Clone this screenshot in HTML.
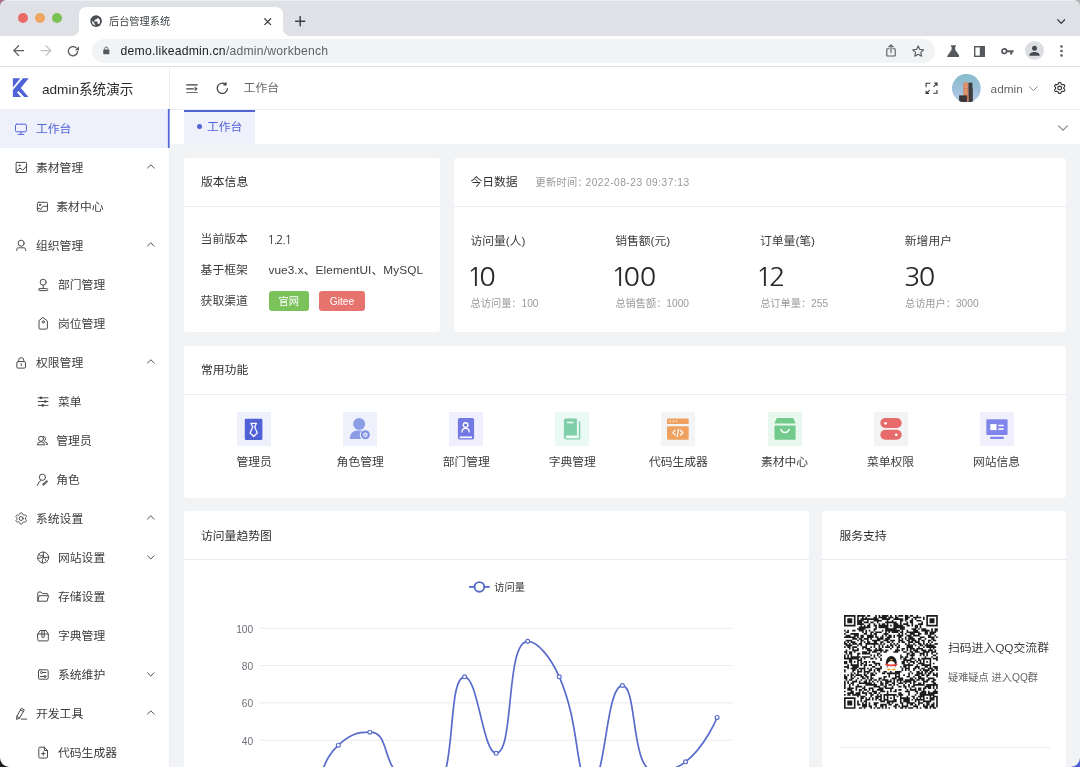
<!DOCTYPE html>
<html lang="zh-CN">
<head>
<meta charset="utf-8">
<title>后台管理系统</title>
<style>
*{box-sizing:border-box}
html,body{margin:0;padding:0}
body{width:1080px;height:767px;overflow:hidden;position:relative;background:#f2f3f5;font-family:"Liberation Sans","Noto Sans CJK SC",sans-serif;font-size:11.800px;color:#3c3c3c;line-height:1}
#wrap{position:absolute;left:0;top:0;width:1080px;height:767px;overflow:hidden;will-change:transform}
.abs{position:absolute}
svg{display:block}
/* ---------- browser chrome ---------- */
#tabbar{position:absolute;left:0;top:0;width:1080px;height:36px;background:#dfe1e6;border-top:1px solid #eceef2}
#tab{position:absolute;left:79px;top:7px;width:204px;height:29px;background:#fff;border-radius:7px 7px 0 0}
#tab:before,#tab:after{content:"";position:absolute;bottom:0;width:7px;height:7px}
#tab:before{left:-7px;background:radial-gradient(circle at 0 0,rgba(255,255,255,0) 6.6px,#fff 7.2px)}
#tab:after{right:-7px;background:radial-gradient(circle at 100% 0,rgba(255,255,255,0) 6.6px,#fff 7.2px)}
.tl{position:absolute;top:12.6px;width:10.4px;height:10.4px;border-radius:50%}
#tabtitle{position:absolute;left:109px;top:17.300px;font-size:10.2px;color:#3c4043;letter-spacing:0}
#toolbar{position:absolute;left:0;top:36px;width:1080px;height:31px;background:#fff;border-bottom:1px solid #dddfe2}
#omni{position:absolute;left:92px;top:39px;width:842.500px;height:24px;border-radius:12px;background:#f1f3f4}
#url{position:absolute;left:120.600px;top:45.100px;font-size:12.200px;color:#202124;white-space:nowrap;letter-spacing:0.215px}
#url span{color:#5f6368}
/* ---------- app ---------- */
#side{position:absolute;left:0;top:67px;width:170px;height:700px;background:#fff;border-right:1px solid #eceef3}
#logo{position:absolute;left:42px;top:82.600px;font-size:13.6px;color:#2b2b2b;white-space:nowrap}
.mi{position:absolute;left:0;width:169px;height:39px}
.mi .ico{position:absolute;left:0;top:0;color:#4a4a4a}
.mi .mt{position:absolute;left:36px;top:15px;white-space:nowrap}
.mi.sub .mt{left:58px}
.mi .chev{position:absolute;left:146.950px;top:16.300px}
.mi.act{background:#eef0fc;color:#5264d6;width:170px}
.mi.act:after{content:"";position:absolute;left:167px;top:0;width:3px;height:39px;background:linear-gradient(90deg,rgba(82,100,214,0) 0,rgba(82,100,214,.25) 33%,#5264d6 34%,#5264d6 66%,rgba(82,100,214,.6) 67%)}
.mi.act .ico{color:#5264d6}
#head{position:absolute;left:170px;top:67px;width:910px;height:43px;background:#fff;border-bottom:1px solid #e8eaf2}
#tabs{position:absolute;left:170px;top:109.6px;width:910px;height:34px;background:#fff}
#atab{position:absolute;left:184px;top:109.8px;width:71px;height:33.8px;background:#eef0fc;border-top:2px solid #5264d6;color:#5264d6}
.card{position:absolute;background:#fff;border-radius:3.400px}
.card .hd{position:absolute;left:0;top:0;right:0;height:49px;border-bottom:1px solid #e9eaf1}
.card .tt{position:absolute;left:17px;top:19.6px;white-space:nowrap;color:#2f2f2f}
.t{position:absolute;white-space:nowrap}
.sm{font-size:10.2px;color:#999}
.big{font-family:"NanumGothic","Liberation Sans",sans-serif;font-size:24.800px;color:#2a2a2a;letter-spacing:0;transform:scaleX(1.100);transform-origin:0 0}
.big i{font-style:normal;display:inline-block}
.btn{position:absolute;top:291.200px;height:19.800px;border-radius:3.200px;color:#fff;font-size:10.2px;text-align:center;line-height:21.400px}
.fi{position:absolute;top:411.6px;width:34px;height:34px}
.fl{position:absolute;top:457.200px;width:106px;text-align:center;white-space:nowrap}
</style>
</head>
<body>
<div id="wrap">
<!-- browser chrome -->
<div id="tabbar"></div>
<svg class="abs" style="left:0;top:0" width="9" height="9" viewBox="0 0 9 9"><path d="M0 0H6.200A6.200 6.200 0 0 0 0 6.200Z" fill="#a8678a"/></svg>
<svg class="abs" style="left:1071px;top:0" width="9" height="9" viewBox="0 0 9 9"><path d="M9 0H2.800A6.200 6.200 0 0 1 9 6.200Z" fill="#b0b0b0"/></svg>
<div class="tl" style="left:17.6px;background:#e96a67"></div>
<div class="tl" style="left:34.6px;background:#f0a660"></div>
<div class="tl" style="left:51.6px;background:#7cc153"></div>
<div id="tab"></div>
<svg class="abs" style="left:89.900px;top:15px" width="12.200" height="12.200" viewBox="0 0 24 24"><circle cx="12" cy="12" r="11.4" fill="#4a4d51"/><path d="M10.8 20.9c-3.9-.5-7-3.900-7-7.900 0-.6.1-1.200.2-1.800L8.800 16v1c0 1.100.9 2 2 2zM17.700 18.400c-.3-.8-1-1.400-1.900-1.400h-1v-3c0-.6-.4-1-1-1h-6v-2h2c.6 0 1-.4 1-1V8h2c1.100 0 2-.9 2-2v-.4c2.900 1.200 5 4.100 5 7.400 0 2.100-.8 4-2.100 5.400z" fill="#fff"/></svg>
<div id="tabtitle">后台管理系统</div>
<svg class="abs" style="left:264.4px;top:17.6px" width="7.4" height="7.4" viewBox="0 0 8 8" stroke="#3c4043" stroke-width="1.3" stroke-linecap="round"><path d="M0.8 0.8L7.2 7.2M7.2 0.8L0.8 7.2"/></svg>
<svg class="abs" style="left:295.4px;top:16.2px" width="10.4" height="10.4" viewBox="0 0 10 10" stroke="#3c4043" stroke-width="1.4" stroke-linecap="round"><path d="M5 0.6V9.400M0.6 5H9.400"/></svg>
<svg class="abs" style="left:1057.4px;top:19px" width="8.4" height="5.4" viewBox="0 0 8.4 5.4" fill="none" stroke="#3c4043" stroke-width="1.3" stroke-linecap="round" stroke-linejoin="round"><path d="M0.8 0.8L4.2 4.4 7.6 0.8"/></svg>
<div id="toolbar"></div>
<div id="omni"></div>
<!-- nav arrows -->
<svg class="abs" style="left:12.8px;top:45.4px" width="11.6" height="11.2" viewBox="0 0 11.6 11.2" fill="none" stroke="#585b5f" stroke-width="1.3" stroke-linecap="round" stroke-linejoin="round"><path d="M10.8 5.600H1M5.600 0.800L0.800 5.600l4.800 4.800"/></svg>
<svg class="abs" style="left:40.200px;top:45.4px" width="11.6" height="11.2" viewBox="0 0 11.6 11.2" fill="none" stroke="#bfc2c6" stroke-width="1.3" stroke-linecap="round" stroke-linejoin="round"><path d="M0.800 5.600H10.600M6 0.800l4.800 4.800-4.800 4.800"/></svg>
<svg class="abs" style="left:66.8px;top:44.6px" width="12.4" height="12.4" viewBox="0 0 12.4 12.4" fill="none" stroke="#585b5f" stroke-width="1.35" stroke-linecap="round" stroke-linejoin="round"><path d="M10.600 6.400a4.600 4.600 0 1 1-1.500-3.600"/><path d="M12.100 1.100v4.100H8z" fill="#585b5f" stroke="none"/></svg>
<!-- lock -->
<svg class="abs" style="left:103.400px;top:46.400px" width="6.600" height="8.800" viewBox="0 0 8 10"><rect x="0.300" y="4" width="7.400" height="5.800" rx="0.900" fill="#55585d"/><path d="M2 4.200V2.900a2 2 0 0 1 4 0v1.300" fill="none" stroke="#55585d" stroke-width="1.1"/></svg>
<div id="url">demo.likeadmin.cn<span>/admin/workbench</span></div>
<!-- share -->
<svg class="abs" style="left:886.400px;top:44.300px" width="10" height="13" viewBox="0 0 10 13" fill="none" stroke="#585b5f" stroke-width="1.1" stroke-linecap="round" stroke-linejoin="round"><path d="M3.200 4.800H1.400a0.600 0.600 0 0 0-0.600 0.600v6a0.600 0.600 0 0 0 0.600 0.600h7.200a0.600 0.600 0 0 0 0.600-0.600v-6a0.600 0.600 0 0 0-0.600-0.600H6.800M5 8.600V0.900M2.800 2.900L5 0.800l2.200 2.100"/></svg>
<!-- star -->
<svg class="abs" style="left:912.400px;top:44.900px" width="12.4" height="12" viewBox="0 0 12.4 12" fill="none" stroke="#585b5f" stroke-width="1.15" stroke-linejoin="round"><path d="M6.200 0.900l1.600 3.500 3.800 0.400-2.800 2.600 0.800 3.800-3.400-1.900-3.400 1.900 0.800-3.800L0.800 4.800l3.800-0.400z"/></svg>
<!-- flask -->
<svg class="abs" style="left:946.600px;top:44.900px" width="12.800" height="12.400" viewBox="0 0 12.800 12.400"><path d="M3.800 0.300h5.200v1.200H8.200v3.200l4.300 6.200a0.900 0.900 0 0 1-0.700 1.400H1a0.900 0.900 0 0 1-0.700-1.400l4.300-6.200V1.500H3.800z" fill="#55585d"/></svg>
<!-- side panel -->
<svg class="abs" style="left:974.400px;top:45.900px" width="11" height="11" viewBox="0 0 11 11"><rect x="0.700" y="0.700" width="9.600" height="9.600" fill="none" stroke="#55585d" stroke-width="1.400"/><rect x="5.800" y="0.700" width="4.500" height="9.600" fill="#55585d"/></svg>
<!-- key -->
<svg class="abs" style="left:1000.600px;top:47.600px" width="13" height="7.6" viewBox="0 0 13 7.6"><circle cx="3.300" cy="3.200" r="2.300" fill="none" stroke="#55585d" stroke-width="1.700"/><path d="M5.600 2.300h7v2h-1.300v2.300H9.200V4.300H5.600z" fill="#55585d"/></svg>
<!-- profile -->
<svg class="abs" style="left:1024.8px;top:41.2px" width="19" height="19" viewBox="0 0 19 19"><circle cx="9.500" cy="9.500" r="9.500" fill="#dcdee2"/><circle cx="9.500" cy="7.300" r="2.500" fill="#45484d"/><path d="M4.400 14.100c0-2.200 3-3.100 5.100-3.100s5.100 0.900 5.100 3.100v0.700H4.400z" fill="#45484d"/></svg>
<!-- dots -->
<svg class="abs" style="left:1060px;top:45px" width="3" height="12" viewBox="0 0 3 12" fill="#585b5f"><circle cx="1.500" cy="1.500" r="1.300"/><circle cx="1.500" cy="6" r="1.300"/><circle cx="1.500" cy="10.500" r="1.300"/></svg>

<!-- sidebar -->
<div id="side"></div>
<svg class="abs" style="left:0;top:66px" width="40" height="43" viewBox="0 66 40 43"><path d="M12.880 78.260H20.390L12.880 87.520Z" fill="#5063d6"/><path d="M22.900 78.260H28.740L20.810 88.060 28.530 97.030H24.150L18.520 90.980 17.060 92.440 21.020 97.030H12.880V89.940Z" fill="#5063d6"/></svg>
<div id="logo">admin系统演示</div>
<div class="mi act" style="top:109px"><svg class="ico" width="56" height="39" viewBox="0 0 56 39" fill="none" stroke="currentColor" stroke-width="1" stroke-linecap="round" stroke-linejoin="round"><rect x="15.5" y="15.2" width="10.9" height="7.6" rx="1.2"/><path d="M21 22.9v2.4M18.200 25.400h5.600"/></svg><span class="mt">工作台</span></div>
<div class="mi" style="top:148px"><svg class="ico" width="56" height="39" viewBox="0 0 56 39" fill="none" stroke="currentColor" stroke-width="1" stroke-linecap="round" stroke-linejoin="round"><rect x="16.100" y="14.400" width="10.400" height="10.100" rx="0.800"/><circle cx="19.500" cy="17.500" r="0.600" fill="currentColor"/><path d="M16.500 24.100L19 20.700Q20 19.900 21 20.700Q22.500 22.400 23.600 21.400L26.400 18.200"/></svg><span class="mt">素材管理</span><svg class="chev" width="7.7" height="4.8" viewBox="0 0 8.8 5.5" fill="none" stroke="#4a4a4a" stroke-width="1.1" stroke-linecap="round" stroke-linejoin="round"><path d="M0.6 4.6L4.4 0.9 8.2 4.6"/></svg></div>
<div class="mi sub" style="top:187px"><svg class="ico" width="56" height="39" viewBox="0 0 56 39" fill="none" stroke="currentColor" stroke-width="1" stroke-linecap="round" stroke-linejoin="round"><rect x="37.400" y="15.300" width="10.100" height="9" rx="1.200"/><circle cx="40" cy="17.900" r="0.700" fill="currentColor"/><path d="M37.600 21.400L39.400 21.500Q40.300 21.700 40.700 22.500L42 20.100Q42.800 19.300 43.600 19.300L47.400 19.300"/></svg><span class="mt" style="left:56.3px">素材中心</span></div>
<div class="mi" style="top:226px"><svg class="ico" width="56" height="39" viewBox="0 0 56 39" fill="none" stroke="currentColor" stroke-width="1" stroke-linecap="round" stroke-linejoin="round"><circle cx="21.200" cy="17.200" r="3"/><path d="M16.800 24.600V23.400a1.600 1.600 0 0 1 1.600-1.600H24a1.600 1.600 0 0 1 1.600 1.600V24.600"/></svg><span class="mt">组织管理</span><svg class="chev" width="7.7" height="4.8" viewBox="0 0 8.8 5.5" fill="none" stroke="#4a4a4a" stroke-width="1.1" stroke-linecap="round" stroke-linejoin="round"><path d="M0.6 4.6L4.4 0.9 8.2 4.6"/></svg></div>
<div class="mi sub" style="top:265px"><svg class="ico" width="56" height="39" viewBox="0 0 56 39" fill="none" stroke="currentColor" stroke-width="1" stroke-linecap="round" stroke-linejoin="round"><circle cx="43.200" cy="17.200" r="3"/><path d="M43.200 20.200v3.200"/><rect x="38.600" y="23.600" width="9.200" height="2" rx="1"/></svg><span class="mt">部门管理</span></div>
<div class="mi sub" style="top:304px"><svg class="ico" width="56" height="39" viewBox="0 0 56 39" fill="none" stroke="currentColor" stroke-width="1" stroke-linecap="round" stroke-linejoin="round"><path d="M43.200 13.700L47.400 17V24.100a1 1 0 0 1-1 1H40a1 1 0 0 1-1-1V17Z"/><circle cx="43.300" cy="17.900" r="1.100"/></svg><span class="mt">岗位管理</span></div>
<div class="mi" style="top:343px"><svg class="ico" width="56" height="39" viewBox="0 0 56 39" fill="none" stroke="currentColor" stroke-width="1" stroke-linecap="round" stroke-linejoin="round"><rect x="16.800" y="18.600" width="8.700" height="6.500" rx="1.200"/><path d="M18.700 18.400V17.200a2.550 2.550 0 0 1 5.100 0V18.400M21.200 20.700V22.600"/></svg><span class="mt">权限管理</span><svg class="chev" width="7.7" height="4.8" viewBox="0 0 8.8 5.5" fill="none" stroke="#4a4a4a" stroke-width="1.1" stroke-linecap="round" stroke-linejoin="round"><path d="M0.6 4.6L4.4 0.9 8.2 4.6"/></svg></div>
<div class="mi sub" style="top:382px"><svg class="ico" width="56" height="39" viewBox="0 0 56 39" fill="none" stroke="currentColor" stroke-width="1" stroke-linecap="round" stroke-linejoin="round"><path d="M38.200 15.800H48M38.200 19.500H48M38.200 23.400H48"/><circle cx="41" cy="15.800" r="1.350" fill="currentColor" stroke="none"/><circle cx="45.200" cy="19.500" r="1.350" fill="currentColor" stroke="none"/><circle cx="42.700" cy="23.400" r="1.350" fill="currentColor" stroke="none"/></svg><span class="mt">菜单</span></div>
<div class="mi sub" style="top:421px"><svg class="ico" width="56" height="39" viewBox="0 0 56 39" fill="none" stroke="currentColor" stroke-width="1" stroke-linecap="round" stroke-linejoin="round"><circle cx="41" cy="17.800" r="2.500"/><path d="M37.300 23.400Q37.600 20.700 41 20.700Q44.400 20.700 44.700 23.400Z"/><path d="M43.300 15.400a2.500 2.500 0 0 1 0.900 4.700M45 20.700Q47.300 21.300 47.700 23.400H46.400"/></svg><span class="mt" style="left:56.3px">管理员</span></div>
<div class="mi sub" style="top:460px"><svg class="ico" width="56" height="39" viewBox="0 0 56 39" fill="none" stroke="currentColor" stroke-width="1" stroke-linecap="round" stroke-linejoin="round"><circle cx="42.400" cy="17.300" r="3.100"/><path d="M40.800 20.500Q38.200 21.400 37.500 25.300"/><path d="M47.500 20.700L42.700 25.100" stroke-width="2.200" stroke="#666" stroke-linecap="butt"/></svg><span class="mt" style="left:56.3px">角色</span></div>
<div class="mi" style="top:499px"><svg class="ico" width="56" height="39" viewBox="0 0 56 39" fill="none" stroke="currentColor" stroke-width="1" stroke-linecap="round" stroke-linejoin="round"><path d="M25.50 19.50 L25.49 19.73 L25.48 19.95 L25.45 20.17 L25.67 20.45 L25.98 20.78 L26.27 21.15 L26.43 21.51 L26.32 21.78 L26.19 22.04 L26.05 22.30 L25.90 22.55 L25.73 22.79 L25.55 23.02 L25.16 23.07 L24.70 23.00 L24.26 22.89 L23.91 22.84 L23.73 22.98 L23.54 23.11 L23.35 23.22 L23.15 23.33 L22.95 23.43 L22.74 23.51 L22.61 23.84 L22.48 24.28 L22.31 24.72 L22.08 25.03 L21.79 25.07 L21.49 25.09 L21.20 25.10 L20.91 25.09 L20.61 25.07 L20.32 25.03 L20.09 24.72 L19.92 24.28 L19.79 23.84 L19.66 23.51 L19.45 23.43 L19.25 23.33 L19.05 23.22 L18.86 23.11 L18.67 22.98 L18.49 22.84 L18.14 22.89 L17.70 23.00 L17.24 23.07 L16.85 23.02 L16.67 22.79 L16.50 22.55 L16.35 22.30 L16.21 22.04 L16.08 21.78 L15.97 21.51 L16.13 21.15 L16.42 20.78 L16.73 20.45 L16.95 20.17 L16.92 19.95 L16.91 19.73 L16.90 19.50 L16.91 19.27 L16.92 19.05 L16.95 18.83 L16.73 18.55 L16.42 18.22 L16.13 17.85 L15.97 17.49 L16.08 17.22 L16.21 16.96 L16.35 16.70 L16.50 16.45 L16.67 16.21 L16.85 15.98 L17.24 15.93 L17.70 16.00 L18.14 16.11 L18.49 16.16 L18.67 16.02 L18.86 15.89 L19.05 15.78 L19.25 15.67 L19.45 15.57 L19.66 15.49 L19.79 15.16 L19.92 14.72 L20.09 14.28 L20.32 13.97 L20.61 13.93 L20.91 13.91 L21.20 13.90 L21.49 13.91 L21.79 13.93 L22.08 13.97 L22.31 14.28 L22.48 14.72 L22.61 15.16 L22.74 15.49 L22.95 15.57 L23.15 15.67 L23.35 15.78 L23.54 15.89 L23.73 16.02 L23.91 16.16 L24.26 16.11 L24.70 16.00 L25.16 15.93 L25.55 15.98 L25.73 16.21 L25.90 16.45 L26.05 16.70 L26.19 16.96 L26.32 17.22 L26.43 17.49 L26.27 17.85 L25.98 18.22 L25.67 18.55 L25.45 18.83 L25.48 19.05 L25.49 19.27Z"/><circle cx="21.200" cy="19.500" r="2"/></svg><span class="mt">系统设置</span><svg class="chev" width="7.7" height="4.8" viewBox="0 0 8.8 5.5" fill="none" stroke="#4a4a4a" stroke-width="1.1" stroke-linecap="round" stroke-linejoin="round"><path d="M0.6 4.6L4.4 0.9 8.2 4.6"/></svg></div>
<div class="mi sub" style="top:538px"><svg class="ico" width="56" height="39" viewBox="0 0 56 39" fill="none" stroke="currentColor" stroke-width="1" stroke-linecap="round" stroke-linejoin="round"><circle cx="43.200" cy="19.500" r="5.500"/><path d="M43.400 14.100V19.500L48.600 19.200M43.400 19.500Q41.400 21.600 42.600 24.900M38.200 16.200Q40.600 18.700 43.400 17.800M37.800 20.600Q41 20.400 43.400 18.400M45 20.800Q45.200 23 47 24"/></svg><span class="mt">网站设置</span><svg class="chev" style="top:17.3px" width="7.7" height="4.8" viewBox="0 0 8.8 5.5" fill="none" stroke="#4a4a4a" stroke-width="1.1" stroke-linecap="round" stroke-linejoin="round"><path d="M0.6 0.9L4.4 4.6 8.2 0.9"/></svg></div>
<div class="mi sub" style="top:577px"><svg class="ico" width="56" height="39" viewBox="0 0 56 39" fill="none" stroke="currentColor" stroke-width="1" stroke-linecap="round" stroke-linejoin="round"><path d="M37.800 24V15.900a0.900 0.900 0 0 1 0.900-0.900H41L42.600 16.600H47a0.700 0.700 0 0 1 0.700 0.700V18.400"/><path d="M39.600 18.700H48.600L47.100 24.200H38Z"/></svg><span class="mt">存储设置</span></div>
<div class="mi sub" style="top:616px"><svg class="ico" width="56" height="39" viewBox="0 0 56 39" fill="none" stroke="currentColor" stroke-width="1" stroke-linecap="round" stroke-linejoin="round"><path d="M37.800 18H48.300V23.900a1 1 0 0 1-1 1H38.800a1 1 0 0 1-1-1ZM37.800 18L40.200 14.500H46L48.300 18"/><path d="M41.900 14.500V21a0.500 0.500 0 0 0 0.500 0.500H43.700a0.500 0.500 0 0 0 0.500-0.500V14.500"/></svg><span class="mt">字典管理</span></div>
<div class="mi sub" style="top:655px"><svg class="ico" width="56" height="39" viewBox="0 0 56 39" fill="none" stroke="currentColor" stroke-width="1" stroke-linecap="round" stroke-linejoin="round"><rect x="38.500" y="14.800" width="9.700" height="9.400" rx="1.300"/><circle cx="41.500" cy="17.500" r="1.050"/><path d="M42.600 17.500H46M40.200 21.500H43.800"/><circle cx="44.900" cy="21.500" r="1.050"/></svg><span class="mt">系统维护</span><svg class="chev" style="top:17.3px" width="7.7" height="4.8" viewBox="0 0 8.8 5.5" fill="none" stroke="#4a4a4a" stroke-width="1.1" stroke-linecap="round" stroke-linejoin="round"><path d="M0.6 0.9L4.4 4.6 8.2 0.9"/></svg></div>
<div class="mi" style="top:694px"><svg class="ico" width="56" height="39" viewBox="0 0 56 39" fill="none" stroke="currentColor" stroke-width="1" stroke-linecap="round" stroke-linejoin="round"><path d="M16.500 25L16.900 22.400 21.400 14.200 24.300 15.900 19.600 24ZM16.900 22.400L19.600 24M20.500 15.900L23.400 17.500M21.200 25.100H26.600"/></svg><span class="mt">开发工具</span><svg class="chev" width="7.7" height="4.8" viewBox="0 0 8.8 5.5" fill="none" stroke="#4a4a4a" stroke-width="1.1" stroke-linecap="round" stroke-linejoin="round"><path d="M0.6 4.6L4.4 0.9 8.2 4.6"/></svg></div>
<div class="mi sub" style="top:733px"><svg class="ico" width="56" height="39" viewBox="0 0 56 39" fill="none" stroke="currentColor" stroke-width="1" stroke-linecap="round" stroke-linejoin="round"><path d="M38.800 15.200a1 1 0 0 1 1-1H44.400L47.500 17.500V24a1 1 0 0 1-1 1H39.800a1 1 0 0 1-1-1ZM44.400 14.200V17.500H47.500M41.600 20.600H45M43.300 18.900V22.300"/></svg><span class="mt">代码生成器</span></div>

<!-- header -->
<div id="head"></div>
<svg class="abs" style="left:186.400px;top:83.600px" width="12" height="9.600" viewBox="0 0 12 9.600" fill="none" stroke="#3d3d3d" stroke-width="1.250" stroke-linecap="round" stroke-linejoin="round"><path d="M0.700 0.800h10.600M0.700 4.800h6.600M0.700 8.800h10.600"/><path d="M9.300 3.200l2 1.600-2 1.600z" fill="#3d3d3d" stroke-width="0.600"/></svg>
<svg class="abs" style="left:215.800px;top:81.900px" width="12.600" height="12.600" viewBox="0 0 12.600 12.600" fill="none" stroke="#3d3d3d" stroke-width="1.200" stroke-linecap="round" stroke-linejoin="round"><path d="M11.400 6.600a5.100 5.100 0 1 1-1.700-4.100"/><path d="M10 0.600v2.200H7.800"/></svg>
<div class="t" style="left:243.600px;top:83.400px;color:#666">工作台</div>
<svg class="abs" style="left:924.700px;top:81.600px" width="12.900" height="12.900" viewBox="0 0 14 14" fill="none" stroke="#303030" stroke-width="1.150" stroke-linecap="butt" stroke-linejoin="miter"><path d="M1.200 5.600V1.300H5.700M9 12.300H13V8.700"/><path d="M9.300 5.200L12.700 1.700M5.100 8.800L1.700 12.100" stroke-width="1.100"/><path d="M10.100 1.300H13V4.300M1.300 9.400V12.400H4.300" stroke-width="1.300"/></svg>
<!-- avatar -->
<svg class="abs" style="left:951.800px;top:73.700px" width="28.800" height="28.800" viewBox="0 0 28.800 28.800"><defs><clipPath id="av"><circle cx="14.400" cy="14.400" r="14.400"/></clipPath><linearGradient id="sky" x1="0" y1="0" x2="0" y2="1"><stop offset="0" stop-color="#84bcc9"/><stop offset="0.550" stop-color="#9fc0dc"/><stop offset="1" stop-color="#bccbe8"/></linearGradient></defs><g clip-path="url(#av)"><rect width="28.800" height="28.800" fill="url(#sky)"/><rect x="11.300" y="8.400" width="5.300" height="21" fill="#d88a63"/><rect x="12.600" y="9.400" width="2.400" height="11" fill="#df9c78" opacity="0.700"/><rect x="16.500" y="8.700" width="3.900" height="21" fill="#3b3a3d"/><rect x="19.800" y="14.500" width="1" height="15" fill="#4a4445"/><rect x="7.100" y="21.400" width="7.900" height="8" fill="#38383b"/><rect x="14.900" y="21.400" width="1.600" height="8" fill="#c9735a"/><path d="M11.300 14.800h5.200" stroke="#b9694c" stroke-width="0.500"/></g></svg>
<div class="t" style="left:990.600px;top:83.600px;color:#666">admin</div>
<svg class="abs" style="left:1029px;top:86px" width="8.800" height="5.400" viewBox="0 0 8.800 5.400" fill="none" stroke="#777" stroke-width="0.900" stroke-linecap="round" stroke-linejoin="round"><path d="M0.600 0.800L4.400 4.600 8.200 0.800"/></svg>
<svg class="abs" style="left:1052px;top:80px" width="16" height="16" viewBox="0 0 16 16" fill="none" stroke="#333" stroke-width="1.15" stroke-linejoin="round"><path d="M11.90 8.00 L11.89 8.22 L11.88 8.44 L11.85 8.66 L12.07 8.93 L12.38 9.26 L12.68 9.62 L12.83 9.97 L12.72 10.24 L12.60 10.50 L12.46 10.75 L12.31 11.00 L12.15 11.23 L11.97 11.46 L11.59 11.50 L11.13 11.43 L10.69 11.32 L10.34 11.26 L10.17 11.40 L9.99 11.52 L9.80 11.64 L9.61 11.74 L9.41 11.84 L9.21 11.92 L9.08 12.25 L8.96 12.68 L8.79 13.12 L8.56 13.43 L8.27 13.47 L7.99 13.49 L7.70 13.50 L7.41 13.49 L7.13 13.47 L6.84 13.43 L6.61 13.12 L6.44 12.68 L6.32 12.25 L6.19 11.92 L5.99 11.84 L5.79 11.74 L5.60 11.64 L5.41 11.52 L5.23 11.40 L5.06 11.26 L4.71 11.32 L4.27 11.43 L3.81 11.50 L3.43 11.46 L3.25 11.23 L3.09 11.00 L2.94 10.75 L2.80 10.50 L2.68 10.24 L2.57 9.97 L2.72 9.62 L3.02 9.26 L3.33 8.93 L3.55 8.66 L3.52 8.44 L3.51 8.22 L3.50 8.00 L3.51 7.78 L3.52 7.56 L3.55 7.34 L3.33 7.07 L3.02 6.74 L2.72 6.38 L2.57 6.03 L2.68 5.76 L2.80 5.50 L2.94 5.25 L3.09 5.00 L3.25 4.77 L3.43 4.54 L3.81 4.50 L4.27 4.57 L4.71 4.68 L5.06 4.74 L5.23 4.60 L5.41 4.48 L5.60 4.36 L5.79 4.26 L5.99 4.16 L6.19 4.08 L6.32 3.75 L6.44 3.32 L6.61 2.88 L6.84 2.57 L7.13 2.53 L7.41 2.51 L7.70 2.50 L7.99 2.51 L8.27 2.53 L8.56 2.57 L8.79 2.88 L8.96 3.32 L9.08 3.75 L9.21 4.08 L9.41 4.16 L9.61 4.26 L9.80 4.36 L9.99 4.48 L10.17 4.60 L10.34 4.74 L10.69 4.68 L11.13 4.57 L11.59 4.50 L11.97 4.54 L12.15 4.77 L12.31 5.00 L12.46 5.25 L12.60 5.50 L12.72 5.76 L12.83 6.03 L12.68 6.38 L12.38 6.74 L12.07 7.07 L11.85 7.34 L11.88 7.56 L11.89 7.78Z"/><circle cx="7.7" cy="8.0" r="1.9"/></svg>

<!-- tabs -->
<div id="tabs"></div>
<div id="atab"><span class="abs" style="left:12.600px;top:12.500px;width:5px;height:5px;border-radius:50%;background:#5264d6"></span><span class="t" style="left:23px;top:10.700px">工作台</span></div>
<svg class="abs" style="left:1058px;top:124.900px" width="10" height="6" viewBox="0 0 10 6" fill="none" stroke="#858585" stroke-width="1.150" stroke-linecap="round" stroke-linejoin="round"><path d="M0.600 0.800L5 5.200 9.400 0.800"/></svg>

<!-- card 1 -->
<div class="card" style="left:184px;top:157.600px;width:256px;height:174px">
 <div class="hd"><div class="tt">版本信息</div></div>
</div>
<div class="t" style="left:200.600px;top:234px">当前版本</div><div class="t" style="left:267.600px;top:234.600px;letter-spacing:-1.100px;color:#1f1f1f;font-family:NanumGothic,'Liberation Sans',sans-serif">1.2.1</div>
<div class="t" style="left:200.600px;top:264.800px">基于框架</div><div class="t" style="left:268.400px;top:265px;letter-spacing:0.090px">vue3.x、ElementUI、MySQL</div>
<div class="t" style="left:200.600px;top:295.600px">获取渠道</div>
<div class="btn" style="left:268.500px;width:40.400px;background:#7bc25a">官网</div>
<div class="btn" style="left:319.400px;width:45.200px;background:#e7736f">Gitee</div>

<!-- card 2 -->
<div class="card" style="left:454px;top:157.600px;width:612.400px;height:174px">
 <div class="hd"><div class="tt" style="left:16.400px">今日数据</div><div class="t sm" style="left:81.400px;top:20.100px;letter-spacing:0.360px">更新时间<span style="margin-right:-2.700px">：</span><span style="letter-spacing:0.500px">2022-08-23 09:37:13</span></div></div>
</div>
<div class="t" style="left:470.400px;top:235.700px">访问量(人)</div><div class="t big" style="left:470.4px;top:265.700px"><i style="margin-left:-2.91px">1</i><i style="margin-left:-3.68px">0</i></div><div class="t sm" style="left:470.600px;top:299px">总访问量：100</div>
<div class="t" style="left:615.200px;top:235.700px">销售额(元)</div><div class="t big" style="left:615.2px;top:265.700px"><i style="margin-left:-3.74px">1</i><i style="margin-left:-3.56px">0</i><i style="margin-left:-0.27px">0</i></div><div class="t sm" style="left:615.400px;top:299px">总销售额：1000</div>
<div class="t" style="left:760px;top:235.700px">订单量(笔)</div><div class="t big" style="left:760.0px;top:265.700px"><i style="margin-left:-3.79px">1</i><i style="margin-left:-3.17px">2</i></div><div class="t sm" style="left:760.200px;top:299px">总订单量：255</div>
<div class="t" style="left:904.800px;top:235.700px">新增用户</div><div class="t big" style="left:904.8px;top:265.700px"><i style="margin-left:-0.80px">3</i><i style="margin-left:-1.66px">0</i></div><div class="t sm" style="left:905px;top:299px">总访用户：3000</div>

<!-- card 3 -->
<div class="card" style="left:184px;top:345.600px;width:882.400px;height:152px">
 <div class="hd"><div class="tt">常用功能</div></div>
</div>
<svg class="fi" style="left:237.2px" width="34" height="34" viewBox="0 0 34 34"><rect width="34" height="34" fill="#eef0fc"/><rect x="7.800" y="6.800" width="17.600" height="21.300" rx="1.400" fill="#5061d5"/><path d="M13.900 11.300H19.500L17.700 14.900 20.300 20.900 16.700 24.500 13.100 20.900 15.700 14.900Z" fill="none" stroke="#fff" stroke-width="1.250" stroke-linejoin="round"/></svg><div class="fl" style="left:201.2px">管理员</div>
<svg class="fi" style="left:343.2px" width="34" height="34" viewBox="0 0 34 34"><rect width="34" height="34" fill="#eef1fc"/><circle cx="16.200" cy="12.100" r="6" fill="#8c9de6"/><path d="M6.800 27C7 21.600 10 18.600 14.400 18.600H19.600Q16.400 22 18 27Z" fill="#8c9de6"/><circle cx="22.300" cy="22.800" r="5.500" fill="#eef1fc"/><circle cx="22.300" cy="22.800" r="4.550" fill="#7d90e3"/><path d="M24.95 22.80 L24.93 23.15 L23.99 23.25 L23.92 23.47 L23.82 23.68 L24.40 24.41 L24.17 24.67 L23.91 24.90 L23.18 24.32 L22.97 24.42 L22.75 24.49 L22.65 25.43 L22.30 25.45 L21.95 25.43 L21.85 24.49 L21.63 24.42 L21.43 24.32 L20.69 24.90 L20.43 24.67 L20.20 24.41 L20.78 23.68 L20.68 23.47 L20.61 23.25 L19.67 23.15 L19.65 22.80 L19.67 22.45 L20.61 22.35 L20.68 22.13 L20.78 21.93 L20.20 21.19 L20.43 20.93 L20.69 20.70 L21.43 21.28 L21.63 21.18 L21.85 21.11 L21.95 20.17 L22.30 20.15 L22.65 20.17 L22.75 21.11 L22.97 21.18 L23.18 21.28 L23.91 20.70 L24.17 20.93 L24.40 21.19 L23.82 21.93 L23.92 22.13 L23.99 22.35 L24.93 22.45Z" fill="#eef1fc"/><circle cx="22.300" cy="22.800" r="0.900" fill="#7d90e3"/></svg><div class="fl" style="left:307.2px">角色管理</div>
<svg class="fi" style="left:449.3px" width="34" height="34" viewBox="0 0 34 34"><rect width="34" height="34" fill="#efeffd"/><rect x="8.900" y="6.100" width="16.200" height="21.400" rx="1.700" fill="#7379e3"/><circle cx="16.600" cy="13.100" r="2.350" fill="none" stroke="#fff" stroke-width="1.300"/><path d="M13 19.900C13 17.400 14.600 16.400 16.600 16.400S20.200 17.400 20.200 19.900" fill="none" stroke="#fff" stroke-width="1.300" stroke-linecap="round"/><rect x="10.700" y="24.400" width="12.300" height="1.800" fill="#f3f3fe"/></svg><div class="fl" style="left:413.3px">部门管理</div>
<svg class="fi" style="left:555.3px" width="34" height="34" viewBox="0 0 34 34"><rect width="34" height="34" fill="#eaf9f3"/><path d="M8.900 8A1.600 1.600 0 0 1 10.500 6.400H21.900V23.400H23.900V9.200H25.300V26.600A0.900 0.900 0 0 1 24.400 27.500H11.600A2.700 2.700 0 0 1 8.900 24.800Z" fill="#7fd0aa"/><path d="M12 23.600H23.900V26.200H12A1.300 1.300 0 0 1 12 23.600Z" fill="#f4fcf8"/><path d="M12.500 10.500H18" stroke="#f4fcf8" stroke-width="1.300" stroke-linecap="round"/></svg><div class="fl" style="left:519.3px">字典管理</div>
<svg class="fi" style="left:661.4px" width="34" height="34" viewBox="0 0 34 34"><rect width="34" height="34" fill="#f3f4f6"/><path d="M7 6.400H26.700A1 1 0 0 1 27.700 7.400V12.100H6V7.400A1 1 0 0 1 7 6.400Z" fill="#f0a05f"/><path d="M6 14.200H27.700V26.750A1 1 0 0 1 26.700 27.750H7A1 1 0 0 1 6 26.750Z" fill="#f0a05f"/><rect x="8.500" y="8.600" width="1.300" height="1.300" fill="#fff"/><rect x="11.600" y="8.600" width="1.300" height="1.300" fill="#fff"/><rect x="14.700" y="8.600" width="1.300" height="1.300" fill="#fff"/><path d="M14.100 18.200L11.900 20.700 14.100 23.200M19.400 18.200L21.900 20.700 19.400 23.200M17.500 17.400L16.200 24.500" fill="none" stroke="#fff" stroke-width="1.250" stroke-linecap="round" stroke-linejoin="round"/></svg><div class="fl" style="left:625.4px">代码生成器</div>
<svg class="fi" style="left:767.5px" width="34" height="34" viewBox="0 0 34 34"><rect width="34" height="34" fill="#e9f8ee"/><path d="M9.300 6.100H24.800A1 1 0 0 1 25.700 6.700L27.600 11.600H6.500L8.400 6.700A1 1 0 0 1 9.300 6.100Z" fill="#72cb8c"/><path d="M6.500 13.400H27.600V26.950A0.800 0.800 0 0 1 26.800 27.750H7.300A0.800 0.800 0 0 1 6.500 26.950Z" fill="#72cb8c"/><path d="M12.900 17.400C13.600 19.800 15.200 20.500 17 20.500S20.400 19.800 21.100 17.400" fill="none" stroke="#fff" stroke-width="1.500" stroke-linecap="round"/></svg><div class="fl" style="left:731.5px">素材中心</div>
<svg class="fi" style="left:873.5px" width="34" height="34" viewBox="0 0 34 34"><rect width="34" height="34" fill="#f2f3f5"/><rect x="6.350" y="6.100" width="21.350" height="9.900" rx="4.950" fill="#e76b6b"/><rect x="6.350" y="17.650" width="21.350" height="10.100" rx="5.050" fill="#e76b6b"/><circle cx="11.600" cy="11.300" r="1.400" fill="#fff"/><circle cx="22.250" cy="22.800" r="1.400" fill="#fff"/></svg><div class="fl" style="left:837.5px">菜单权限</div>
<svg class="fi" style="left:979.5px" width="34" height="34" viewBox="0 0 34 34"><rect width="34" height="34" fill="#f0f0fd"/><rect x="6.350" y="7.150" width="21.250" height="15.900" rx="1.100" fill="#8085ec"/><rect x="10" y="24.800" width="14.100" height="2.100" rx="1.050" fill="#8085ec"/><rect x="10.300" y="12.100" width="6.200" height="6" fill="#fff"/><rect x="18.350" y="12.800" width="5.250" height="1.400" fill="#fff"/><rect x="18.350" y="16.300" width="5.250" height="1.550" fill="#fff"/></svg><div class="fl" style="left:943.5px">网站信息</div>

<!-- card 4 -->
<div class="card" style="left:184px;top:511.400px;width:624.800px;height:270px">
 <div class="hd" style="height:48.400px"><div class="tt">访问量趋势图</div></div>
</div>
<svg class="chart" width="1080" height="767" viewBox="0 0 1080 767" style="position:absolute;left:0;top:0">
<line x1="259.4" x2="732.9" y1="628.3" y2="628.3" stroke="#e6e8ee" stroke-width="0.9"/><text x="253.2" y="632.6" text-anchor="end" font-size="10.2" fill="#6e7079">100</text><line x1="259.4" x2="732.9" y1="665.6" y2="665.6" stroke="#e6e8ee" stroke-width="0.9"/><text x="253.2" y="669.9" text-anchor="end" font-size="10.2" fill="#6e7079">80</text><line x1="259.4" x2="732.9" y1="702.9" y2="702.9" stroke="#e6e8ee" stroke-width="0.9"/><text x="253.2" y="707.2" text-anchor="end" font-size="10.2" fill="#6e7079">60</text><line x1="259.4" x2="732.9" y1="740.2" y2="740.2" stroke="#e6e8ee" stroke-width="0.9"/><text x="253.2" y="744.5" text-anchor="end" font-size="10.2" fill="#6e7079">40</text>
<path d="M275.18 799.88 C275.18 799.88 295.12 799.88 306.75 791.49 C326.69 777.10 318.71 763.65 338.32 745.24 C350.28 734.00 357.82 732.18 369.88 732.18 C389.39 732.18 381.67 761.85 401.45 777.50 C413.24 786.82 425.97 786.82 433.02 786.82 C457.53 786.82 446.26 676.79 464.58 676.79 C477.83 676.79 483.03 753.25 496.15 753.25 C514.59 753.25 505.30 641.35 527.72 641.35 C536.87 641.35 549.82 655.55 559.28 676.79 C581.39 726.42 574.45 783.09 590.85 783.09 C606.01 783.09 605.70 685.56 622.42 685.56 C637.27 685.56 630.79 770.97 653.98 770.97 C662.35 770.97 673.67 770.97 685.55 761.83 C705.24 746.69 717.12 717.45 717.12 717.45" fill="none" stroke="#586ccb" stroke-width="1.7"/>
<circle cx="275.18" cy="799.88" r="1.950" fill="#fff" stroke="#586ccb" stroke-width="1.150"/><circle cx="306.75" cy="791.49" r="1.950" fill="#fff" stroke="#586ccb" stroke-width="1.150"/><circle cx="338.32" cy="745.24" r="1.950" fill="#fff" stroke="#586ccb" stroke-width="1.150"/><circle cx="369.88" cy="732.18" r="1.950" fill="#fff" stroke="#586ccb" stroke-width="1.150"/><circle cx="401.45" cy="777.50" r="1.950" fill="#fff" stroke="#586ccb" stroke-width="1.150"/><circle cx="433.02" cy="786.82" r="1.950" fill="#fff" stroke="#586ccb" stroke-width="1.150"/><circle cx="464.58" cy="676.79" r="1.950" fill="#fff" stroke="#586ccb" stroke-width="1.150"/><circle cx="496.15" cy="753.25" r="1.950" fill="#fff" stroke="#586ccb" stroke-width="1.150"/><circle cx="527.72" cy="641.35" r="1.950" fill="#fff" stroke="#586ccb" stroke-width="1.150"/><circle cx="559.28" cy="676.79" r="1.950" fill="#fff" stroke="#586ccb" stroke-width="1.150"/><circle cx="590.85" cy="783.09" r="1.950" fill="#fff" stroke="#586ccb" stroke-width="1.150"/><circle cx="622.42" cy="685.56" r="1.950" fill="#fff" stroke="#586ccb" stroke-width="1.150"/><circle cx="653.98" cy="770.97" r="1.950" fill="#fff" stroke="#586ccb" stroke-width="1.150"/><circle cx="685.55" cy="761.83" r="1.950" fill="#fff" stroke="#586ccb" stroke-width="1.150"/><circle cx="717.12" cy="717.45" r="1.950" fill="#fff" stroke="#586ccb" stroke-width="1.150"/>
<line x1="469.1" x2="489.7" y1="586.9" y2="586.9" stroke="#586ccb" stroke-width="1.9"/>
<circle cx="479.4" cy="586.9" r="4.8" fill="#fff" stroke="#586ccb" stroke-width="1.9"/>
<text x="494.3" y="591" font-size="10.2" fill="#333">访问量</text>
</svg>

<!-- card 5 -->
<div class="card" style="left:822.400px;top:511.400px;width:244px;height:270px">
 <div class="hd" style="height:48.400px"><div class="tt">服务支持</div></div>
</div>
<svg width="93.8" height="93.8" viewBox="0 0 93.8 93.8" style="position:absolute;left:844px;top:614.8px" ><rect width="93.8" height="93.8" fill="#fff"/><path d="M0.00 0.00h11.52v1.65h-11.52zM13.16 0.00h8.23v1.65h-8.23zM23.04 0.00h3.29v1.65h-3.29zM31.27 0.00h1.65v1.65h-1.65zM34.56 0.00h1.65v1.65h-1.65zM37.85 0.00h6.58v1.65h-6.58zM46.08 0.00h1.65v1.65h-1.65zM51.01 0.00h1.65v1.65h-1.65zM54.31 0.00h4.94v1.65h-4.94zM60.89 0.00h3.29v1.65h-3.29zM65.82 0.00h3.29v1.65h-3.29zM72.41 0.00h1.65v1.65h-1.65zM82.28 0.00h11.52v1.65h-11.52zM0.00 1.65h1.65v1.65h-1.65zM9.87 1.65h1.65v1.65h-1.65zM13.16 1.65h1.65v1.65h-1.65zM18.10 1.65h1.65v1.65h-1.65zM21.39 1.65h1.65v1.65h-1.65zM29.62 1.65h3.29v1.65h-3.29zM34.56 1.65h8.23v1.65h-8.23zM44.43 1.65h4.94v1.65h-4.94zM51.01 1.65h3.29v1.65h-3.29zM60.89 1.65h4.94v1.65h-4.94zM69.12 1.65h8.23v1.65h-8.23zM78.99 1.65h1.65v1.65h-1.65zM82.28 1.65h1.65v1.65h-1.65zM92.15 1.65h1.65v1.65h-1.65zM0.00 3.29h1.65v1.65h-1.65zM3.29 3.29h4.94v1.65h-4.94zM9.87 3.29h1.65v1.65h-1.65zM13.16 3.29h1.65v1.65h-1.65zM16.46 3.29h18.10v1.65h-18.10zM37.85 3.29h8.23v1.65h-8.23zM49.37 3.29h9.87v1.65h-9.87zM60.89 3.29h3.29v1.65h-3.29zM67.47 3.29h1.65v1.65h-1.65zM70.76 3.29h1.65v1.65h-1.65zM78.99 3.29h1.65v1.65h-1.65zM82.28 3.29h1.65v1.65h-1.65zM85.57 3.29h4.94v1.65h-4.94zM92.15 3.29h1.65v1.65h-1.65zM0.00 4.94h1.65v1.65h-1.65zM3.29 4.94h4.94v1.65h-4.94zM9.87 4.94h1.65v1.65h-1.65zM13.16 4.94h6.58v1.65h-6.58zM23.04 4.94h1.65v1.65h-1.65zM29.62 4.94h8.23v1.65h-8.23zM42.79 4.94h1.65v1.65h-1.65zM47.72 4.94h1.65v1.65h-1.65zM55.95 4.94h3.29v1.65h-3.29zM60.89 4.94h1.65v1.65h-1.65zM65.82 4.94h3.29v1.65h-3.29zM72.41 4.94h4.94v1.65h-4.94zM82.28 4.94h1.65v1.65h-1.65zM85.57 4.94h4.94v1.65h-4.94zM92.15 4.94h1.65v1.65h-1.65zM0.00 6.58h1.65v1.65h-1.65zM3.29 6.58h4.94v1.65h-4.94zM9.87 6.58h1.65v1.65h-1.65zM13.16 6.58h4.94v1.65h-4.94zM19.75 6.58h4.94v1.65h-4.94zM26.33 6.58h3.29v1.65h-3.29zM32.91 6.58h1.65v1.65h-1.65zM41.14 6.58h11.52v1.65h-11.52zM55.95 6.58h1.65v1.65h-1.65zM62.53 6.58h1.65v1.65h-1.65zM65.82 6.58h3.29v1.65h-3.29zM77.34 6.58h1.65v1.65h-1.65zM82.28 6.58h1.65v1.65h-1.65zM85.57 6.58h4.94v1.65h-4.94zM92.15 6.58h1.65v1.65h-1.65zM0.00 8.23h1.65v1.65h-1.65zM9.87 8.23h1.65v1.65h-1.65zM13.16 8.23h6.58v1.65h-6.58zM24.68 8.23h1.65v1.65h-1.65zM29.62 8.23h1.65v1.65h-1.65zM34.56 8.23h1.65v1.65h-1.65zM37.85 8.23h3.29v1.65h-3.29zM42.79 8.23h1.65v1.65h-1.65zM49.37 8.23h4.94v1.65h-4.94zM55.95 8.23h1.65v1.65h-1.65zM59.24 8.23h4.94v1.65h-4.94zM67.47 8.23h1.65v1.65h-1.65zM74.05 8.23h4.94v1.65h-4.94zM82.28 8.23h1.65v1.65h-1.65zM92.15 8.23h1.65v1.65h-1.65zM0.00 9.87h11.52v1.65h-11.52zM16.46 9.87h1.65v1.65h-1.65zM19.75 9.87h1.65v1.65h-1.65zM23.04 9.87h3.29v1.65h-3.29zM29.62 9.87h3.29v1.65h-3.29zM34.56 9.87h9.87v1.65h-9.87zM46.08 9.87h1.65v1.65h-1.65zM49.37 9.87h9.87v1.65h-9.87zM62.53 9.87h3.29v1.65h-3.29zM67.47 9.87h1.65v1.65h-1.65zM70.76 9.87h3.29v1.65h-3.29zM75.70 9.87h1.65v1.65h-1.65zM82.28 9.87h11.52v1.65h-11.52zM14.81 11.52h11.52v1.65h-11.52zM31.27 11.52h1.65v1.65h-1.65zM34.56 11.52h9.87v1.65h-9.87zM49.37 11.52h11.52v1.65h-11.52zM70.76 11.52h3.29v1.65h-3.29zM75.70 11.52h1.65v1.65h-1.65zM13.16 13.16h8.23v1.65h-8.23zM29.62 13.16h3.29v1.65h-3.29zM41.14 13.16h11.52v1.65h-11.52zM55.95 13.16h4.94v1.65h-4.94zM67.47 13.16h4.94v1.65h-4.94zM74.05 13.16h1.65v1.65h-1.65zM77.34 13.16h4.94v1.65h-4.94zM87.22 13.16h1.65v1.65h-1.65zM90.51 13.16h3.29v1.65h-3.29zM0.00 14.81h1.65v1.65h-1.65zM3.29 14.81h1.65v1.65h-1.65zM8.23 14.81h3.29v1.65h-3.29zM14.81 14.81h4.94v1.65h-4.94zM21.39 14.81h1.65v1.65h-1.65zM24.68 14.81h1.65v1.65h-1.65zM29.62 14.81h1.65v1.65h-1.65zM37.85 14.81h1.65v1.65h-1.65zM41.14 14.81h14.81v1.65h-14.81zM57.60 14.81h1.65v1.65h-1.65zM62.53 14.81h1.65v1.65h-1.65zM69.12 14.81h4.94v1.65h-4.94zM77.34 14.81h8.23v1.65h-8.23zM87.22 14.81h1.65v1.65h-1.65zM90.51 14.81h3.29v1.65h-3.29zM1.65 16.46h3.29v1.65h-3.29zM18.10 16.46h1.65v1.65h-1.65zM21.39 16.46h1.65v1.65h-1.65zM26.33 16.46h3.29v1.65h-3.29zM31.27 16.46h6.58v1.65h-6.58zM41.14 16.46h1.65v1.65h-1.65zM44.43 16.46h1.65v1.65h-1.65zM47.72 16.46h6.58v1.65h-6.58zM55.95 16.46h3.29v1.65h-3.29zM62.53 16.46h13.16v1.65h-13.16zM80.64 16.46h3.29v1.65h-3.29zM85.57 16.46h6.58v1.65h-6.58zM0.00 18.10h1.65v1.65h-1.65zM6.58 18.10h8.23v1.65h-8.23zM19.75 18.10h3.29v1.65h-3.29zM26.33 18.10h1.65v1.65h-1.65zM29.62 18.10h3.29v1.65h-3.29zM39.49 18.10h4.94v1.65h-4.94zM54.31 18.10h1.65v1.65h-1.65zM57.60 18.10h1.65v1.65h-1.65zM60.89 18.10h1.65v1.65h-1.65zM65.82 18.10h4.94v1.65h-4.94zM74.05 18.10h3.29v1.65h-3.29zM80.64 18.10h3.29v1.65h-3.29zM85.57 18.10h4.94v1.65h-4.94zM1.65 19.75h4.94v1.65h-4.94zM9.87 19.75h4.94v1.65h-4.94zM16.46 19.75h3.29v1.65h-3.29zM23.04 19.75h6.58v1.65h-6.58zM31.27 19.75h1.65v1.65h-1.65zM37.85 19.75h1.65v1.65h-1.65zM41.14 19.75h1.65v1.65h-1.65zM44.43 19.75h3.29v1.65h-3.29zM49.37 19.75h1.65v1.65h-1.65zM52.66 19.75h6.58v1.65h-6.58zM62.53 19.75h4.94v1.65h-4.94zM69.12 19.75h6.58v1.65h-6.58zM83.93 19.75h3.29v1.65h-3.29zM90.51 19.75h1.65v1.65h-1.65zM0.00 21.39h11.52v1.65h-11.52zM13.16 21.39h1.65v1.65h-1.65zM16.46 21.39h3.29v1.65h-3.29zM23.04 21.39h6.58v1.65h-6.58zM31.27 21.39h3.29v1.65h-3.29zM36.20 21.39h3.29v1.65h-3.29zM42.79 21.39h4.94v1.65h-4.94zM49.37 21.39h1.65v1.65h-1.65zM54.31 21.39h3.29v1.65h-3.29zM60.89 21.39h1.65v1.65h-1.65zM64.18 21.39h4.94v1.65h-4.94zM75.70 21.39h4.94v1.65h-4.94zM83.93 21.39h6.58v1.65h-6.58zM92.15 21.39h1.65v1.65h-1.65zM8.23 23.04h4.94v1.65h-4.94zM14.81 23.04h3.29v1.65h-3.29zM19.75 23.04h4.94v1.65h-4.94zM26.33 23.04h1.65v1.65h-1.65zM32.91 23.04h6.58v1.65h-6.58zM41.14 23.04h4.94v1.65h-4.94zM54.31 23.04h1.65v1.65h-1.65zM57.60 23.04h1.65v1.65h-1.65zM60.89 23.04h1.65v1.65h-1.65zM64.18 23.04h6.58v1.65h-6.58zM74.05 23.04h3.29v1.65h-3.29zM80.64 23.04h1.65v1.65h-1.65zM87.22 23.04h3.29v1.65h-3.29zM1.65 24.68h6.58v1.65h-6.58zM13.16 24.68h1.65v1.65h-1.65zM16.46 24.68h3.29v1.65h-3.29zM23.04 24.68h1.65v1.65h-1.65zM27.98 24.68h8.23v1.65h-8.23zM39.49 24.68h4.94v1.65h-4.94zM46.08 24.68h4.94v1.65h-4.94zM54.31 24.68h4.94v1.65h-4.94zM62.53 24.68h3.29v1.65h-3.29zM67.47 24.68h4.94v1.65h-4.94zM74.05 24.68h1.65v1.65h-1.65zM77.34 24.68h3.29v1.65h-3.29zM83.93 24.68h3.29v1.65h-3.29zM88.86 24.68h3.29v1.65h-3.29zM0.00 26.33h1.65v1.65h-1.65zM3.29 26.33h1.65v1.65h-1.65zM6.58 26.33h4.94v1.65h-4.94zM16.46 26.33h1.65v1.65h-1.65zM19.75 26.33h1.65v1.65h-1.65zM23.04 26.33h3.29v1.65h-3.29zM29.62 26.33h3.29v1.65h-3.29zM36.20 26.33h3.29v1.65h-3.29zM42.79 26.33h3.29v1.65h-3.29zM47.72 26.33h1.65v1.65h-1.65zM54.31 26.33h1.65v1.65h-1.65zM57.60 26.33h3.29v1.65h-3.29zM64.18 26.33h4.94v1.65h-4.94zM70.76 26.33h4.94v1.65h-4.94zM78.99 26.33h1.65v1.65h-1.65zM83.93 26.33h1.65v1.65h-1.65zM87.22 26.33h1.65v1.65h-1.65zM0.00 27.98h3.29v1.65h-3.29zM4.94 27.98h1.65v1.65h-1.65zM8.23 27.98h4.94v1.65h-4.94zM14.81 27.98h3.29v1.65h-3.29zM21.39 27.98h13.16v1.65h-13.16zM36.20 27.98h1.65v1.65h-1.65zM39.49 27.98h1.65v1.65h-1.65zM46.08 27.98h1.65v1.65h-1.65zM49.37 27.98h1.65v1.65h-1.65zM52.66 27.98h1.65v1.65h-1.65zM60.89 27.98h1.65v1.65h-1.65zM64.18 27.98h1.65v1.65h-1.65zM69.12 27.98h1.65v1.65h-1.65zM74.05 27.98h3.29v1.65h-3.29zM78.99 27.98h1.65v1.65h-1.65zM82.28 27.98h1.65v1.65h-1.65zM85.57 27.98h1.65v1.65h-1.65zM90.51 27.98h3.29v1.65h-3.29zM1.65 29.62h6.58v1.65h-6.58zM13.16 29.62h1.65v1.65h-1.65zM16.46 29.62h1.65v1.65h-1.65zM21.39 29.62h1.65v1.65h-1.65zM29.62 29.62h1.65v1.65h-1.65zM34.56 29.62h1.65v1.65h-1.65zM37.85 29.62h1.65v1.65h-1.65zM42.79 29.62h1.65v1.65h-1.65zM46.08 29.62h3.29v1.65h-3.29zM51.01 29.62h1.65v1.65h-1.65zM54.31 29.62h1.65v1.65h-1.65zM62.53 29.62h6.58v1.65h-6.58zM70.76 29.62h1.65v1.65h-1.65zM75.70 29.62h3.29v1.65h-3.29zM80.64 29.62h9.87v1.65h-9.87zM0.00 31.27h1.65v1.65h-1.65zM3.29 31.27h3.29v1.65h-3.29zM8.23 31.27h4.94v1.65h-4.94zM18.10 31.27h4.94v1.65h-4.94zM26.33 31.27h1.65v1.65h-1.65zM29.62 31.27h1.65v1.65h-1.65zM34.56 31.27h1.65v1.65h-1.65zM37.85 31.27h1.65v1.65h-1.65zM41.14 31.27h4.94v1.65h-4.94zM47.72 31.27h1.65v1.65h-1.65zM52.66 31.27h3.29v1.65h-3.29zM62.53 31.27h6.58v1.65h-6.58zM74.05 31.27h1.65v1.65h-1.65zM78.99 31.27h1.65v1.65h-1.65zM82.28 31.27h9.87v1.65h-9.87zM4.94 32.91h1.65v1.65h-1.65zM8.23 32.91h1.65v1.65h-1.65zM13.16 32.91h1.65v1.65h-1.65zM18.10 32.91h1.65v1.65h-1.65zM21.39 32.91h4.94v1.65h-4.94zM31.27 32.91h1.65v1.65h-1.65zM34.56 32.91h3.29v1.65h-3.29zM46.08 32.91h1.65v1.65h-1.65zM52.66 32.91h1.65v1.65h-1.65zM57.60 32.91h3.29v1.65h-3.29zM62.53 32.91h1.65v1.65h-1.65zM65.82 32.91h4.94v1.65h-4.94zM72.41 32.91h6.58v1.65h-6.58zM85.57 32.91h1.65v1.65h-1.65zM88.86 32.91h1.65v1.65h-1.65zM1.65 34.56h1.65v1.65h-1.65zM8.23 34.56h6.58v1.65h-6.58zM23.04 34.56h4.94v1.65h-4.94zM29.62 34.56h9.87v1.65h-9.87zM41.14 34.56h3.29v1.65h-3.29zM51.01 34.56h4.94v1.65h-4.94zM57.60 34.56h1.65v1.65h-1.65zM62.53 34.56h1.65v1.65h-1.65zM65.82 34.56h1.65v1.65h-1.65zM69.12 34.56h4.94v1.65h-4.94zM77.34 34.56h4.94v1.65h-4.94zM83.93 34.56h4.94v1.65h-4.94zM90.51 34.56h1.65v1.65h-1.65zM0.00 36.20h3.29v1.65h-3.29zM4.94 36.20h3.29v1.65h-3.29zM9.87 36.20h1.65v1.65h-1.65zM18.10 36.20h4.94v1.65h-4.94zM24.68 36.20h1.65v1.65h-1.65zM27.98 36.20h4.94v1.65h-4.94zM36.20 36.20h1.65v1.65h-1.65zM39.49 36.20h3.29v1.65h-3.29zM49.37 36.20h4.94v1.65h-4.94zM59.24 36.20h3.29v1.65h-3.29zM65.82 36.20h3.29v1.65h-3.29zM70.76 36.20h4.94v1.65h-4.94zM78.99 36.20h6.58v1.65h-6.58zM87.22 36.20h4.94v1.65h-4.94zM1.65 37.85h1.65v1.65h-1.65zM4.94 37.85h3.29v1.65h-3.29zM13.16 37.85h3.29v1.65h-3.29zM18.10 37.85h8.23v1.65h-8.23zM32.91 37.85h3.29v1.65h-3.29zM62.53 37.85h3.29v1.65h-3.29zM67.47 37.85h3.29v1.65h-3.29zM75.70 37.85h4.94v1.65h-4.94zM82.28 37.85h1.65v1.65h-1.65zM87.22 37.85h1.65v1.65h-1.65zM92.15 37.85h1.65v1.65h-1.65zM0.00 39.49h1.65v1.65h-1.65zM3.29 39.49h1.65v1.65h-1.65zM6.58 39.49h1.65v1.65h-1.65zM13.16 39.49h1.65v1.65h-1.65zM26.33 39.49h1.65v1.65h-1.65zM29.62 39.49h1.65v1.65h-1.65zM32.91 39.49h1.65v1.65h-1.65zM36.20 39.49h1.65v1.65h-1.65zM55.95 39.49h1.65v1.65h-1.65zM62.53 39.49h1.65v1.65h-1.65zM65.82 39.49h4.94v1.65h-4.94zM75.70 39.49h1.65v1.65h-1.65zM78.99 39.49h1.65v1.65h-1.65zM82.28 39.49h1.65v1.65h-1.65zM88.86 39.49h3.29v1.65h-3.29zM0.00 41.14h1.65v1.65h-1.65zM3.29 41.14h1.65v1.65h-1.65zM6.58 41.14h9.87v1.65h-9.87zM18.10 41.14h8.23v1.65h-8.23zM29.62 41.14h1.65v1.65h-1.65zM34.56 41.14h1.65v1.65h-1.65zM55.95 41.14h3.29v1.65h-3.29zM60.89 41.14h3.29v1.65h-3.29zM67.47 41.14h1.65v1.65h-1.65zM80.64 41.14h1.65v1.65h-1.65zM87.22 41.14h1.65v1.65h-1.65zM92.15 41.14h1.65v1.65h-1.65zM0.00 42.79h14.81v1.65h-14.81zM16.46 42.79h1.65v1.65h-1.65zM19.75 42.79h1.65v1.65h-1.65zM26.33 42.79h3.29v1.65h-3.29zM31.27 42.79h1.65v1.65h-1.65zM36.20 42.79h1.65v1.65h-1.65zM55.95 42.79h1.65v1.65h-1.65zM59.24 42.79h3.29v1.65h-3.29zM65.82 42.79h4.94v1.65h-4.94zM74.05 42.79h1.65v1.65h-1.65zM77.34 42.79h9.87v1.65h-9.87zM88.86 42.79h4.94v1.65h-4.94zM4.94 44.43h3.29v1.65h-3.29zM13.16 44.43h4.94v1.65h-4.94zM36.20 44.43h1.65v1.65h-1.65zM59.24 44.43h8.23v1.65h-8.23zM70.76 44.43h1.65v1.65h-1.65zM74.05 44.43h3.29v1.65h-3.29zM78.99 44.43h1.65v1.65h-1.65zM85.57 44.43h1.65v1.65h-1.65zM92.15 44.43h1.65v1.65h-1.65zM0.00 46.08h3.29v1.65h-3.29zM4.94 46.08h3.29v1.65h-3.29zM9.87 46.08h1.65v1.65h-1.65zM13.16 46.08h1.65v1.65h-1.65zM16.46 46.08h1.65v1.65h-1.65zM19.75 46.08h3.29v1.65h-3.29zM24.68 46.08h1.65v1.65h-1.65zM27.98 46.08h3.29v1.65h-3.29zM57.60 46.08h3.29v1.65h-3.29zM62.53 46.08h1.65v1.65h-1.65zM65.82 46.08h4.94v1.65h-4.94zM72.41 46.08h1.65v1.65h-1.65zM75.70 46.08h1.65v1.65h-1.65zM78.99 46.08h1.65v1.65h-1.65zM82.28 46.08h1.65v1.65h-1.65zM85.57 46.08h1.65v1.65h-1.65zM0.00 47.72h3.29v1.65h-3.29zM6.58 47.72h1.65v1.65h-1.65zM13.16 47.72h1.65v1.65h-1.65zM16.46 47.72h3.29v1.65h-3.29zM21.39 47.72h1.65v1.65h-1.65zM29.62 47.72h6.58v1.65h-6.58zM57.60 47.72h3.29v1.65h-3.29zM64.18 47.72h1.65v1.65h-1.65zM69.12 47.72h1.65v1.65h-1.65zM74.05 47.72h6.58v1.65h-6.58zM85.57 47.72h1.65v1.65h-1.65zM88.86 47.72h1.65v1.65h-1.65zM3.29 49.37h1.65v1.65h-1.65zM6.58 49.37h8.23v1.65h-8.23zM16.46 49.37h1.65v1.65h-1.65zM19.75 49.37h3.29v1.65h-3.29zM24.68 49.37h3.29v1.65h-3.29zM31.27 49.37h1.65v1.65h-1.65zM34.56 49.37h1.65v1.65h-1.65zM59.24 49.37h9.87v1.65h-9.87zM72.41 49.37h1.65v1.65h-1.65zM77.34 49.37h9.87v1.65h-9.87zM0.00 51.01h4.94v1.65h-4.94zM8.23 51.01h6.58v1.65h-6.58zM19.75 51.01h1.65v1.65h-1.65zM27.98 51.01h3.29v1.65h-3.29zM36.20 51.01h1.65v1.65h-1.65zM55.95 51.01h1.65v1.65h-1.65zM59.24 51.01h3.29v1.65h-3.29zM64.18 51.01h1.65v1.65h-1.65zM70.76 51.01h4.94v1.65h-4.94zM80.64 51.01h3.29v1.65h-3.29zM85.57 51.01h1.65v1.65h-1.65zM88.86 51.01h4.94v1.65h-4.94zM3.29 52.66h1.65v1.65h-1.65zM6.58 52.66h6.58v1.65h-6.58zM14.81 52.66h6.58v1.65h-6.58zM23.04 52.66h1.65v1.65h-1.65zM26.33 52.66h1.65v1.65h-1.65zM31.27 52.66h6.58v1.65h-6.58zM57.60 52.66h1.65v1.65h-1.65zM60.89 52.66h4.94v1.65h-4.94zM69.12 52.66h3.29v1.65h-3.29zM74.05 52.66h1.65v1.65h-1.65zM77.34 52.66h3.29v1.65h-3.29zM83.93 52.66h4.94v1.65h-4.94zM90.51 52.66h3.29v1.65h-3.29zM0.00 54.31h1.65v1.65h-1.65zM8.23 54.31h3.29v1.65h-3.29zM13.16 54.31h1.65v1.65h-1.65zM16.46 54.31h1.65v1.65h-1.65zM19.75 54.31h1.65v1.65h-1.65zM24.68 54.31h3.29v1.65h-3.29zM29.62 54.31h1.65v1.65h-1.65zM32.91 54.31h3.29v1.65h-3.29zM57.60 54.31h1.65v1.65h-1.65zM60.89 54.31h1.65v1.65h-1.65zM64.18 54.31h1.65v1.65h-1.65zM69.12 54.31h1.65v1.65h-1.65zM75.70 54.31h1.65v1.65h-1.65zM78.99 54.31h6.58v1.65h-6.58zM87.22 54.31h3.29v1.65h-3.29zM92.15 54.31h1.65v1.65h-1.65zM0.00 55.95h1.65v1.65h-1.65zM8.23 55.95h1.65v1.65h-1.65zM13.16 55.95h4.94v1.65h-4.94zM19.75 55.95h6.58v1.65h-6.58zM29.62 55.95h1.65v1.65h-1.65zM34.56 55.95h1.65v1.65h-1.65zM39.49 55.95h3.29v1.65h-3.29zM46.08 55.95h1.65v1.65h-1.65zM51.01 55.95h6.58v1.65h-6.58zM65.82 55.95h1.65v1.65h-1.65zM72.41 55.95h3.29v1.65h-3.29zM77.34 55.95h1.65v1.65h-1.65zM80.64 55.95h3.29v1.65h-3.29zM85.57 55.95h3.29v1.65h-3.29zM6.58 57.60h1.65v1.65h-1.65zM9.87 57.60h1.65v1.65h-1.65zM13.16 57.60h1.65v1.65h-1.65zM19.75 57.60h1.65v1.65h-1.65zM23.04 57.60h1.65v1.65h-1.65zM26.33 57.60h3.29v1.65h-3.29zM31.27 57.60h1.65v1.65h-1.65zM37.85 57.60h3.29v1.65h-3.29zM42.79 57.60h13.16v1.65h-13.16zM64.18 57.60h1.65v1.65h-1.65zM67.47 57.60h1.65v1.65h-1.65zM72.41 57.60h6.58v1.65h-6.58zM80.64 57.60h1.65v1.65h-1.65zM83.93 57.60h3.29v1.65h-3.29zM88.86 57.60h1.65v1.65h-1.65zM92.15 57.60h1.65v1.65h-1.65zM0.00 59.24h1.65v1.65h-1.65zM3.29 59.24h1.65v1.65h-1.65zM6.58 59.24h3.29v1.65h-3.29zM11.52 59.24h6.58v1.65h-6.58zM19.75 59.24h3.29v1.65h-3.29zM26.33 59.24h4.94v1.65h-4.94zM44.43 59.24h1.65v1.65h-1.65zM51.01 59.24h1.65v1.65h-1.65zM54.31 59.24h1.65v1.65h-1.65zM59.24 59.24h1.65v1.65h-1.65zM64.18 59.24h1.65v1.65h-1.65zM70.76 59.24h4.94v1.65h-4.94zM77.34 59.24h3.29v1.65h-3.29zM82.28 59.24h3.29v1.65h-3.29zM88.86 59.24h4.94v1.65h-4.94zM0.00 60.89h3.29v1.65h-3.29zM6.58 60.89h1.65v1.65h-1.65zM9.87 60.89h1.65v1.65h-1.65zM16.46 60.89h3.29v1.65h-3.29zM21.39 60.89h3.29v1.65h-3.29zM26.33 60.89h1.65v1.65h-1.65zM39.49 60.89h3.29v1.65h-3.29zM44.43 60.89h1.65v1.65h-1.65zM51.01 60.89h4.94v1.65h-4.94zM62.53 60.89h3.29v1.65h-3.29zM69.12 60.89h1.65v1.65h-1.65zM74.05 60.89h3.29v1.65h-3.29zM82.28 60.89h1.65v1.65h-1.65zM92.15 60.89h1.65v1.65h-1.65zM0.00 62.53h3.29v1.65h-3.29zM6.58 62.53h3.29v1.65h-3.29zM13.16 62.53h1.65v1.65h-1.65zM18.10 62.53h3.29v1.65h-3.29zM23.04 62.53h1.65v1.65h-1.65zM26.33 62.53h3.29v1.65h-3.29zM34.56 62.53h3.29v1.65h-3.29zM39.49 62.53h1.65v1.65h-1.65zM47.72 62.53h4.94v1.65h-4.94zM54.31 62.53h4.94v1.65h-4.94zM65.82 62.53h3.29v1.65h-3.29zM70.76 62.53h1.65v1.65h-1.65zM74.05 62.53h6.58v1.65h-6.58zM83.93 62.53h6.58v1.65h-6.58zM1.65 64.18h1.65v1.65h-1.65zM4.94 64.18h3.29v1.65h-3.29zM11.52 64.18h1.65v1.65h-1.65zM16.46 64.18h1.65v1.65h-1.65zM21.39 64.18h1.65v1.65h-1.65zM24.68 64.18h3.29v1.65h-3.29zM29.62 64.18h3.29v1.65h-3.29zM34.56 64.18h1.65v1.65h-1.65zM37.85 64.18h6.58v1.65h-6.58zM46.08 64.18h1.65v1.65h-1.65zM49.37 64.18h1.65v1.65h-1.65zM52.66 64.18h6.58v1.65h-6.58zM60.89 64.18h9.87v1.65h-9.87zM72.41 64.18h3.29v1.65h-3.29zM77.34 64.18h3.29v1.65h-3.29zM82.28 64.18h3.29v1.65h-3.29zM88.86 64.18h3.29v1.65h-3.29zM0.00 65.82h1.65v1.65h-1.65zM3.29 65.82h1.65v1.65h-1.65zM8.23 65.82h4.94v1.65h-4.94zM14.81 65.82h1.65v1.65h-1.65zM19.75 65.82h3.29v1.65h-3.29zM24.68 65.82h1.65v1.65h-1.65zM27.98 65.82h1.65v1.65h-1.65zM32.91 65.82h1.65v1.65h-1.65zM36.20 65.82h1.65v1.65h-1.65zM41.14 65.82h6.58v1.65h-6.58zM49.37 65.82h1.65v1.65h-1.65zM52.66 65.82h1.65v1.65h-1.65zM55.95 65.82h1.65v1.65h-1.65zM59.24 65.82h8.23v1.65h-8.23zM69.12 65.82h3.29v1.65h-3.29zM78.99 65.82h4.94v1.65h-4.94zM87.22 65.82h3.29v1.65h-3.29zM0.00 67.47h1.65v1.65h-1.65zM3.29 67.47h1.65v1.65h-1.65zM6.58 67.47h3.29v1.65h-3.29zM14.81 67.47h13.16v1.65h-13.16zM29.62 67.47h1.65v1.65h-1.65zM36.20 67.47h3.29v1.65h-3.29zM41.14 67.47h3.29v1.65h-3.29zM47.72 67.47h3.29v1.65h-3.29zM54.31 67.47h4.94v1.65h-4.94zM60.89 67.47h1.65v1.65h-1.65zM65.82 67.47h1.65v1.65h-1.65zM69.12 67.47h1.65v1.65h-1.65zM74.05 67.47h3.29v1.65h-3.29zM78.99 67.47h1.65v1.65h-1.65zM88.86 67.47h3.29v1.65h-3.29zM0.00 69.12h1.65v1.65h-1.65zM4.94 69.12h1.65v1.65h-1.65zM8.23 69.12h1.65v1.65h-1.65zM13.16 69.12h1.65v1.65h-1.65zM21.39 69.12h11.52v1.65h-11.52zM36.20 69.12h3.29v1.65h-3.29zM41.14 69.12h1.65v1.65h-1.65zM44.43 69.12h3.29v1.65h-3.29zM49.37 69.12h1.65v1.65h-1.65zM52.66 69.12h1.65v1.65h-1.65zM59.24 69.12h1.65v1.65h-1.65zM64.18 69.12h1.65v1.65h-1.65zM69.12 69.12h11.52v1.65h-11.52zM82.28 69.12h11.52v1.65h-11.52zM0.00 70.76h1.65v1.65h-1.65zM4.94 70.76h1.65v1.65h-1.65zM11.52 70.76h6.58v1.65h-6.58zM19.75 70.76h1.65v1.65h-1.65zM29.62 70.76h6.58v1.65h-6.58zM39.49 70.76h3.29v1.65h-3.29zM47.72 70.76h1.65v1.65h-1.65zM54.31 70.76h3.29v1.65h-3.29zM59.24 70.76h3.29v1.65h-3.29zM64.18 70.76h1.65v1.65h-1.65zM67.47 70.76h3.29v1.65h-3.29zM80.64 70.76h6.58v1.65h-6.58zM88.86 70.76h1.65v1.65h-1.65zM92.15 70.76h1.65v1.65h-1.65zM0.00 72.41h1.65v1.65h-1.65zM3.29 72.41h6.58v1.65h-6.58zM11.52 72.41h1.65v1.65h-1.65zM18.10 72.41h3.29v1.65h-3.29zM24.68 72.41h4.94v1.65h-4.94zM34.56 72.41h4.94v1.65h-4.94zM41.14 72.41h8.23v1.65h-8.23zM60.89 72.41h1.65v1.65h-1.65zM65.82 72.41h1.65v1.65h-1.65zM70.76 72.41h1.65v1.65h-1.65zM74.05 72.41h3.29v1.65h-3.29zM78.99 72.41h3.29v1.65h-3.29zM83.93 72.41h3.29v1.65h-3.29zM88.86 72.41h1.65v1.65h-1.65zM92.15 72.41h1.65v1.65h-1.65zM3.29 74.05h4.94v1.65h-4.94zM11.52 74.05h1.65v1.65h-1.65zM14.81 74.05h3.29v1.65h-3.29zM19.75 74.05h3.29v1.65h-3.29zM24.68 74.05h1.65v1.65h-1.65zM27.98 74.05h1.65v1.65h-1.65zM32.91 74.05h6.58v1.65h-6.58zM46.08 74.05h1.65v1.65h-1.65zM51.01 74.05h1.65v1.65h-1.65zM54.31 74.05h3.29v1.65h-3.29zM62.53 74.05h1.65v1.65h-1.65zM65.82 74.05h6.58v1.65h-6.58zM74.05 74.05h3.29v1.65h-3.29zM78.99 74.05h1.65v1.65h-1.65zM90.51 74.05h1.65v1.65h-1.65zM0.00 75.70h1.65v1.65h-1.65zM6.58 75.70h3.29v1.65h-3.29zM14.81 75.70h1.65v1.65h-1.65zM18.10 75.70h1.65v1.65h-1.65zM23.04 75.70h1.65v1.65h-1.65zM27.98 75.70h4.94v1.65h-4.94zM36.20 75.70h4.94v1.65h-4.94zM42.79 75.70h1.65v1.65h-1.65zM46.08 75.70h1.65v1.65h-1.65zM49.37 75.70h3.29v1.65h-3.29zM60.89 75.70h4.94v1.65h-4.94zM70.76 75.70h3.29v1.65h-3.29zM77.34 75.70h4.94v1.65h-4.94zM83.93 75.70h1.65v1.65h-1.65zM88.86 75.70h4.94v1.65h-4.94zM3.29 77.34h6.58v1.65h-6.58zM11.52 77.34h4.94v1.65h-4.94zM18.10 77.34h4.94v1.65h-4.94zM24.68 77.34h3.29v1.65h-3.29zM29.62 77.34h3.29v1.65h-3.29zM34.56 77.34h1.65v1.65h-1.65zM42.79 77.34h1.65v1.65h-1.65zM54.31 77.34h3.29v1.65h-3.29zM64.18 77.34h1.65v1.65h-1.65zM72.41 77.34h1.65v1.65h-1.65zM75.70 77.34h6.58v1.65h-6.58zM83.93 77.34h9.87v1.65h-9.87zM0.00 78.99h1.65v1.65h-1.65zM3.29 78.99h3.29v1.65h-3.29zM8.23 78.99h8.23v1.65h-8.23zM21.39 78.99h1.65v1.65h-1.65zM26.33 78.99h3.29v1.65h-3.29zM32.91 78.99h1.65v1.65h-1.65zM36.20 78.99h1.65v1.65h-1.65zM39.49 78.99h13.16v1.65h-13.16zM54.31 78.99h4.94v1.65h-4.94zM64.18 78.99h1.65v1.65h-1.65zM70.76 78.99h1.65v1.65h-1.65zM75.70 78.99h14.81v1.65h-14.81zM13.16 80.64h1.65v1.65h-1.65zM16.46 80.64h4.94v1.65h-4.94zM26.33 80.64h1.65v1.65h-1.65zM31.27 80.64h6.58v1.65h-6.58zM39.49 80.64h1.65v1.65h-1.65zM42.79 80.64h1.65v1.65h-1.65zM49.37 80.64h1.65v1.65h-1.65zM52.66 80.64h1.65v1.65h-1.65zM55.95 80.64h1.65v1.65h-1.65zM62.53 80.64h1.65v1.65h-1.65zM67.47 80.64h3.29v1.65h-3.29zM74.05 80.64h6.58v1.65h-6.58zM85.57 80.64h1.65v1.65h-1.65zM88.86 80.64h4.94v1.65h-4.94zM0.00 82.28h11.52v1.65h-11.52zM16.46 82.28h3.29v1.65h-3.29zM21.39 82.28h1.65v1.65h-1.65zM24.68 82.28h1.65v1.65h-1.65zM27.98 82.28h1.65v1.65h-1.65zM31.27 82.28h3.29v1.65h-3.29zM36.20 82.28h1.65v1.65h-1.65zM39.49 82.28h1.65v1.65h-1.65zM42.79 82.28h1.65v1.65h-1.65zM46.08 82.28h1.65v1.65h-1.65zM49.37 82.28h1.65v1.65h-1.65zM55.95 82.28h9.87v1.65h-9.87zM69.12 82.28h1.65v1.65h-1.65zM72.41 82.28h1.65v1.65h-1.65zM75.70 82.28h1.65v1.65h-1.65zM78.99 82.28h1.65v1.65h-1.65zM82.28 82.28h1.65v1.65h-1.65zM85.57 82.28h4.94v1.65h-4.94zM92.15 82.28h1.65v1.65h-1.65zM0.00 83.93h1.65v1.65h-1.65zM9.87 83.93h1.65v1.65h-1.65zM16.46 83.93h1.65v1.65h-1.65zM21.39 83.93h4.94v1.65h-4.94zM27.98 83.93h1.65v1.65h-1.65zM31.27 83.93h1.65v1.65h-1.65zM34.56 83.93h3.29v1.65h-3.29zM39.49 83.93h4.94v1.65h-4.94zM49.37 83.93h3.29v1.65h-3.29zM55.95 83.93h1.65v1.65h-1.65zM59.24 83.93h6.58v1.65h-6.58zM67.47 83.93h1.65v1.65h-1.65zM70.76 83.93h9.87v1.65h-9.87zM85.57 83.93h4.94v1.65h-4.94zM92.15 83.93h1.65v1.65h-1.65zM0.00 85.57h1.65v1.65h-1.65zM3.29 85.57h4.94v1.65h-4.94zM9.87 85.57h1.65v1.65h-1.65zM13.16 85.57h1.65v1.65h-1.65zM16.46 85.57h1.65v1.65h-1.65zM19.75 85.57h3.29v1.65h-3.29zM36.20 85.57h4.94v1.65h-4.94zM42.79 85.57h9.87v1.65h-9.87zM55.95 85.57h1.65v1.65h-1.65zM59.24 85.57h6.58v1.65h-6.58zM70.76 85.57h1.65v1.65h-1.65zM74.05 85.57h1.65v1.65h-1.65zM78.99 85.57h8.23v1.65h-8.23zM92.15 85.57h1.65v1.65h-1.65zM0.00 87.22h1.65v1.65h-1.65zM3.29 87.22h4.94v1.65h-4.94zM9.87 87.22h1.65v1.65h-1.65zM13.16 87.22h1.65v1.65h-1.65zM18.10 87.22h1.65v1.65h-1.65zM21.39 87.22h1.65v1.65h-1.65zM24.68 87.22h1.65v1.65h-1.65zM29.62 87.22h4.94v1.65h-4.94zM42.79 87.22h3.29v1.65h-3.29zM47.72 87.22h1.65v1.65h-1.65zM55.95 87.22h3.29v1.65h-3.29zM62.53 87.22h8.23v1.65h-8.23zM74.05 87.22h4.94v1.65h-4.94zM82.28 87.22h3.29v1.65h-3.29zM88.86 87.22h1.65v1.65h-1.65zM92.15 87.22h1.65v1.65h-1.65zM0.00 88.86h1.65v1.65h-1.65zM3.29 88.86h4.94v1.65h-4.94zM9.87 88.86h1.65v1.65h-1.65zM13.16 88.86h3.29v1.65h-3.29zM18.10 88.86h4.94v1.65h-4.94zM24.68 88.86h1.65v1.65h-1.65zM29.62 88.86h3.29v1.65h-3.29zM36.20 88.86h6.58v1.65h-6.58zM44.43 88.86h3.29v1.65h-3.29zM51.01 88.86h3.29v1.65h-3.29zM57.60 88.86h1.65v1.65h-1.65zM62.53 88.86h1.65v1.65h-1.65zM65.82 88.86h3.29v1.65h-3.29zM70.76 88.86h1.65v1.65h-1.65zM74.05 88.86h1.65v1.65h-1.65zM78.99 88.86h1.65v1.65h-1.65zM82.28 88.86h3.29v1.65h-3.29zM87.22 88.86h3.29v1.65h-3.29zM92.15 88.86h1.65v1.65h-1.65zM0.00 90.51h1.65v1.65h-1.65zM9.87 90.51h1.65v1.65h-1.65zM18.10 90.51h4.94v1.65h-4.94zM24.68 90.51h3.29v1.65h-3.29zM31.27 90.51h1.65v1.65h-1.65zM36.20 90.51h3.29v1.65h-3.29zM41.14 90.51h1.65v1.65h-1.65zM49.37 90.51h3.29v1.65h-3.29zM54.31 90.51h1.65v1.65h-1.65zM57.60 90.51h6.58v1.65h-6.58zM69.12 90.51h4.94v1.65h-4.94zM78.99 90.51h4.94v1.65h-4.94zM85.57 90.51h4.94v1.65h-4.94zM92.15 90.51h1.65v1.65h-1.65zM0.00 92.15h11.52v1.65h-11.52zM14.81 92.15h3.29v1.65h-3.29zM19.75 92.15h1.65v1.65h-1.65zM26.33 92.15h1.65v1.65h-1.65zM29.62 92.15h1.65v1.65h-1.65zM32.91 92.15h3.29v1.65h-3.29zM37.85 92.15h1.65v1.65h-1.65zM41.14 92.15h1.65v1.65h-1.65zM44.43 92.15h1.65v1.65h-1.65zM51.01 92.15h1.65v1.65h-1.65zM55.95 92.15h3.29v1.65h-3.29zM60.89 92.15h1.65v1.65h-1.65zM64.18 92.15h4.94v1.65h-4.94zM72.41 92.15h1.65v1.65h-1.65zM75.70 92.15h1.65v1.65h-1.65zM80.64 92.15h3.29v1.65h-3.29zM85.57 92.15h1.65v1.65h-1.65zM88.86 92.15h3.29v1.65h-3.29z" fill="#1c1c1c"/>
<g shape-rendering="auto"><rect x="38.6" y="38.2" width="17.6" height="17.6" fill="#fff"/>
<ellipse cx="47.3" cy="47.6" rx="5.4" ry="6.6" fill="#1a1a1a"/><ellipse cx="47.3" cy="50.4" rx="3.9" ry="4.4" fill="#fff"/>
<path d="M41.6 48.2c3.4 1.6 8 1.6 11.4 0l0.4 1.8c-3.6 1.8-8.6 1.8-12.2 0z" fill="#e8413a"/>
<ellipse cx="47.3" cy="44.6" rx="1.5" ry="0.7" fill="#f5a623"/>
<ellipse cx="44.8" cy="54.6" rx="2" ry="0.8" fill="#f5a623"/><ellipse cx="49.8" cy="54.6" rx="2" ry="0.8" fill="#f5a623"/></g></svg>
<div class="t" style="left:948px;top:643.100px">扫码进入QQ交流群</div>
<div class="t" style="left:948px;top:673.200px;font-size:10.200px;color:#666">疑难疑点 进入QQ群</div>
<div class="abs" style="left:840px;top:747px;width:209.600px;height:1px;background:#eaedf0"></div>

<!-- window corners -->
<svg class="abs" style="left:0;top:757px" width="10" height="10" viewBox="0 0 10 10"><path d="M0 10H9.300A9.300 9.300 0 0 1 0 0.700Z" fill="#1f1f24"/></svg>
<svg class="abs" style="left:1070px;top:757px" width="10" height="10" viewBox="0 0 10 10"><path d="M10 10H0.700A9.300 9.300 0 0 0 10 0.700Z" fill="#4f5fd6"/></svg>
</div>
</body>
</html>
